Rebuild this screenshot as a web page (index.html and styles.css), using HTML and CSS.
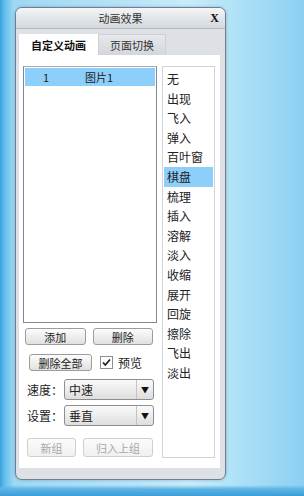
FILE: index.html
```html
<!DOCTYPE html>
<html lang="zh">
<head>
    <meta charset="UTF-8">
    <title>动画效果</title>
    <link rel="stylesheet" href="styles.css">
</head>
<body>
    <div class="window">
        <!-- Barra de título -->
        <div class="titlebar">
            <span></span>
            <span class="title">动画效果</span>
            <span class="close">X</span>
        </div>

        <div class="frame">
            <!-- Pestañas -->
            <div class="tabs">
                <div class="tab active">自定义动画</div>
                <div class="tab">页面切换</div>
            </div>

            <div class="panel">
                <div class="left-col">
                    <div class="list">
                        <div class="list-row selected">
                            <span class="num">1</span>
                            <span class="name">图片1</span>
                        </div>
                    </div>

                    <div class="btn-row">
                        <button class="btn">添加</button>
                        <button class="btn">删除</button>
                    </div>

                    <div class="btn-row second">
                        <button class="btn wide">删除全部</button>
                        <label class="check">
                            <svg width="13" height="13" viewBox="0 0 13 13">
                                <rect x="0.5" y="0.5" width="12" height="12" fill="#fff" stroke="#8e8f8f"/>
                                <path d="M3 6.5 L5.3 9 L10 3.5" fill="none" stroke="#222" stroke-width="1.8"/>
                            </svg>
                            <span>预览</span>
                        </label>
                    </div>

                    <div class="field">
                        <span class="label">速度：</span>
                        <div class="select">
                            <span class="value">中速</span>
                            <span class="arrow">&#9660;</span>
                        </div>
                    </div>
                    <div class="field">
                        <span class="label">设置：</span>
                        <div class="select">
                            <span class="value">垂直</span>
                            <span class="arrow">&#9660;</span>
                        </div>
                    </div>

                    <div class="btn-row last">
                        <button class="btn disabled small">新组</button>
                        <button class="btn disabled large">归入上组</button>
                    </div>
                </div>

                <!-- Lista de efectos -->
                <ul class="effects">
                    <li>无</li>
                    <li>出现</li>
                    <li>飞入</li>
                    <li>弹入</li>
                    <li>百叶窗</li>
                    <li class="selected">棋盘</li>
                    <li>梳理</li>
                    <li>插入</li>
                    <li>溶解</li>
                    <li>淡入</li>
                    <li>收缩</li>
                    <li>展开</li>
                    <li>回旋</li>
                    <li>擦除</li>
                    <li>飞出</li>
                    <li>淡出</li>
                </ul>
            </div>
        </div>
    </div>
</body>
</html>
```

FILE: styles.css
```css
body {
    margin: 0;
    width: 304px;
    height: 496px;
    overflow: hidden;
    font-family: "Noto Sans CJK SC", "Noto Sans", sans-serif;
    font-size: 12px;
    color: #222;
    background:
        linear-gradient(to bottom, rgba(0, 0, 0, 0) 485px, #5db4e5 489px, #3a9dd7 496px),
        linear-gradient(to right, #3aa2de 0, #66c0ed 5px, #9fd8f4 14px, #b9e4f8 45%, #c8ecfa 62%, #ace0f6 80%, #8ccff2 100%);
}

/* Ventana */
.window {
    margin: 7px 0 0 15px;
    width: 211px;
    height: 473px;
    box-sizing: border-box;
    border: 1px solid #6f7f8e;
    border-radius: 7px;
    background: #dde1e5;
    display: flex;
    flex-direction: column;
    box-shadow: 0 0 3px rgba(40, 70, 100, 0.35);
}

.titlebar {
    height: 20px;
    display: grid;
    grid-template-columns: 1fr auto 1fr;
    align-items: center;
    background: linear-gradient(#f4f5f7, #e0e3e6 60%, #d4d8dc);
    border-bottom: 1px solid #b3b9bf;
    border-radius: 6px 6px 0 0;
}

.title {
    font-size: 11px;
    color: #333;
}

.close {
    justify-self: end;
    margin-right: 6px;
    font-family: "Liberation Serif", serif;
    font-weight: bold;
    font-size: 12px;
    color: #111;
}

.frame {
    flex: 1;
    display: flex;
    flex-direction: column;
    padding: 5px 5px 11px 3px;
}

/* Pestañas */
.tabs {
    display: flex;
    height: 21px;
}

.tab {
    display: flex;
    align-items: center;
    justify-content: center;
    font-size: 11px;
    color: #333;
    background: linear-gradient(#e6e8eb, #d3d7db);
    border: 1px solid #cdd1d5;
    border-bottom: none;
    width: 66px;
}

.tab.active {
    width: 77px;
    background: #fff;
    border-color: #fff;
    font-weight: bold;
    color: #111;
}

.panel {
    flex: 1;
    background: #fff;
    display: flex;
    gap: 5px;
    padding: 11px 5px 8px 4px;
}

.left-col {
    width: 134px;
    display: flex;
    flex-direction: column;
}

.list {
    height: 257px;
    box-sizing: border-box;
    border: 1px solid #828790;
    border-top-color: #a6a9ae;
    padding: 1px;
}

.list-row {
    height: 18px;
    display: flex;
    align-items: center;
    font-size: 11px;
}

.list-row.selected {
    background: #8ccffa;
}

.num {
    width: 38px;
    padding-left: 18px;
    box-sizing: border-box;
}

.name {
    margin-left: 22px;
}

/* Botones */
.btn-row {
    display: flex;
    gap: 7px;
    margin-top: 5px;
    padding: 0 4px 0 2px;
}

.btn {
    flex: 1;
    height: 17px;
    padding: 0;
    font-family: inherit;
    font-size: 11px;
    color: #222;
    background: linear-gradient(#fdfdfd, #eeeeee 50%, #e0e0e0);
    border: 1px solid #9c9c9c;
    border-radius: 3px;
}

.btn-row.second {
    margin-top: 9px;
    padding-left: 6px;
    align-items: center;
}

.btn.wide {
    flex: none;
    width: 63px;
}

.check {
    display: flex;
    align-items: center;
    gap: 5px;
    margin-left: 1px;
    font-size: 12px;
}

.field {
    display: flex;
    align-items: center;
    margin-top: 5px;
    padding-left: 4px;
}

.btn-row.second + .field {
    margin-top: 8px;
}

.label {
    width: 37px;
    font-size: 12px;
}

.select {
    width: 90px;
    height: 21px;
    box-sizing: border-box;
    display: flex;
    align-items: flex-end;
    border: 1px solid #8e8e8e;
    border-radius: 3px;
    background: linear-gradient(#fafafa, #ececec 50%, #dedede);
}

.value {
    flex: 1;
    padding-left: 4px;
    line-height: 18px;
}

.arrow {
    width: 16px;
    height: 19px;
    align-self: center;
    display: flex;
    align-items: center;
    justify-content: center;
    font-size: 8px;
    color: #111;
    border-left: 1px solid #c3c3c3;
}

.btn-row.last {
    margin-top: 12px;
    padding-left: 4px;
}

.btn.disabled {
    height: 19px;
    color: #a8a8a8;
    border-color: #cfcfcf;
    background: linear-gradient(#fbfbfb, #f0f0f0);
}

.btn.small {
    flex: none;
    width: 49px;
}

.btn.large {
    flex: none;
    width: 70px;
}

/* Lista de efectos */
.effects {
    list-style: none;
    margin: 0;
    padding: 2px 1px;
    width: 53px;
    height: 392px;
    box-sizing: border-box;
    border: 1px solid #d0d3d7;
}

.effects li {
    height: 19.6px;
    line-height: 19.6px;
    padding-left: 3px;
    font-size: 12px;
    color: #222;
}

.effects li.selected {
    background: #8ccffa;
}
```
